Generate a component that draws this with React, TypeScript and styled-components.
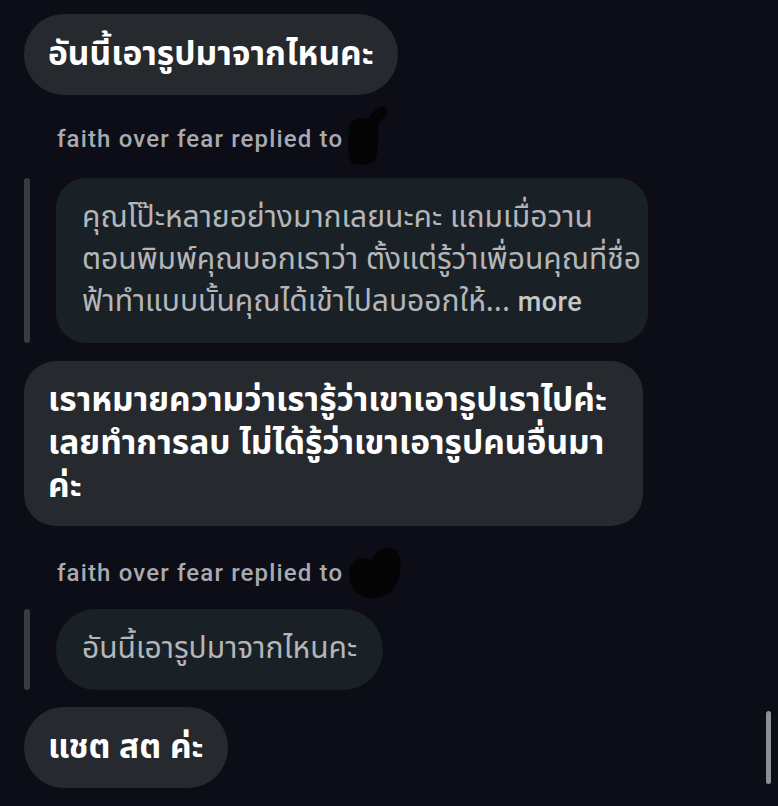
import styled, { createGlobalStyle } from 'styled-components';

const GlobalStyle = createGlobalStyle`
  html, body {
    margin: 0;
    padding: 0;
    background: #0c0d17;
  }
  body {
    font-family: 'Noto Sans Thai', 'Noto Sans', 'Liberation Sans', sans-serif;
  }
`;

const Thread = styled.div`
  position: relative;
  width: 778px;
  height: 806px;
  box-sizing: border-box;
  padding: 14px 0 0 24px;
  display: flex;
  flex-direction: column;
  align-items: flex-start;
  overflow: hidden;
`;

const Bubble = styled.div<{ $top?: number }>`
  margin-top: ${({ $top }) => $top ?? 0}px;
  background: #26292e;
  color: #ffffff;
  font-weight: 700;
  font-size: 33.5px;
  line-height: 43px;
  padding: 19px 24px;
  border-radius: 40px;
  box-sizing: border-box;
  white-space: nowrap;
`;

const WideBubble = styled(Bubble)`
  width: 619px;
  padding: 18px 24px;
  border-radius: 32px;
`;

const ReplyLabel = styled.div<{ $top: number }>`
  display: flex;
  align-items: center;
  margin: ${({ $top }) => $top}px 0 0 33px;
  height: 34px;
  font-family: 'Roboto', 'Liberation Sans', sans-serif;
  font-weight: 500;
  font-size: 24px;
  letter-spacing: 1.15px;
  color: #a8aab0;
`;

const Quote = styled.div<{ $top: number }>`
  display: flex;
  align-items: stretch;
  gap: 26px;
  margin-top: ${({ $top }) => $top}px;
`;

const QuoteBar = styled.div`
  width: 6px;
  border-radius: 3px;
  background: #393b43;
`;

const QuoteBubble = styled.div<{ $wide?: boolean }>`
  background: #1a2126;
  color: #b4b6ba;
  font-size: 30px;
  line-height: 42px;
  box-sizing: border-box;
  white-space: nowrap;
  width: ${({ $wide }) => ($wide ? '592px' : 'auto')};
  padding: 19px 26px 20px 26px;
  border-radius: ${({ $wide }) => ($wide ? '30px' : '40px')};
`;

const More = styled.span`
  font-family: 'Roboto', 'Liberation Sans', sans-serif;
  font-weight: 500;
  font-size: 27px;
  letter-spacing: 0.5px;
  color: #c4c6ca;
`;

const Redacted = styled.svg<{ $dy: number }>`
  flex: none;
  margin: ${({ $dy }) => $dy}px 0 -30px 3px;
`;

const Scrollbar = styled.div`
  position: absolute;
  right: 7px;
  top: 711px;
  width: 5px;
  height: 73px;
  border-radius: 3px;
  background: #8d8e94;
`;

function Scribble({ variant }: { variant: 1 | 2 }) {
  if (variant === 1) {
    return (
      <Redacted $dy={-36} width="44" height="62" viewBox="0 0 44 62">
        <path
          d="M4 20 C6 14 14 12 22 14 C26 8 30 2 36 1 C41 0 43 6 40 10 C37 14 33 17 32 22 C33 32 32 46 30 54 C28 60 14 61 6 58 C1 52 2 30 4 20 Z"
          fill="#040404"
        />
      </Redacted>
    );
  }
  return (
    <Redacted $dy={-30} width="56" height="54" viewBox="0 0 56 54">
      <path
        d="M4 22 C8 12 18 10 26 14 C30 4 40 -1 48 3 C56 8 56 24 52 34 C48 46 38 53 24 52 C10 51 0 38 4 22 Z"
        fill="#040404"
      />
    </Redacted>
  );
}

export default function App() {
  return (
    <>
      <GlobalStyle />
      <Thread>
        <Bubble>อันนี้เอารูปมาจากไหนคะ</Bubble>

        <ReplyLabel $top={27}>
          faith over fear replied to
          <Scribble variant={1} />
        </ReplyLabel>
        <Quote $top={22}>
          <QuoteBar />
          <QuoteBubble $wide>
            คุณโป๊ะหลายอย่างมากเลยนะคะ แถมเมื่อวาน
            <br />
            ตอนพิมพ์คุณบอกเราว่า ตั้งแต่รู้ว่าเพื่อนคุณที่ชื่อ
            <br />
            ฟ้าทำแบบนั้นคุณได้เข้าไปลบออกให้... <More>more</More>
          </QuoteBubble>
        </Quote>

        <WideBubble $top={18}>
          เราหมายความว่าเรารู้ว่าเขาเอารูปเราไปค่ะ
          <br />
          เลยทำการลบ ไม่ได้รู้ว่าเขาเอารูปคนอื่นมา
          <br />
          ค่ะ
        </WideBubble>

        <ReplyLabel $top={30}>
          faith over fear replied to
          <Scribble variant={2} />
        </ReplyLabel>
        <Quote $top={19}>
          <QuoteBar />
          <QuoteBubble>อันนี้เอารูปมาจากไหนคะ</QuoteBubble>
        </Quote>

        <Bubble $top={17}>แชต สต ค่ะ</Bubble>
        <Scrollbar />
      </Thread>
    </>
  );
}
